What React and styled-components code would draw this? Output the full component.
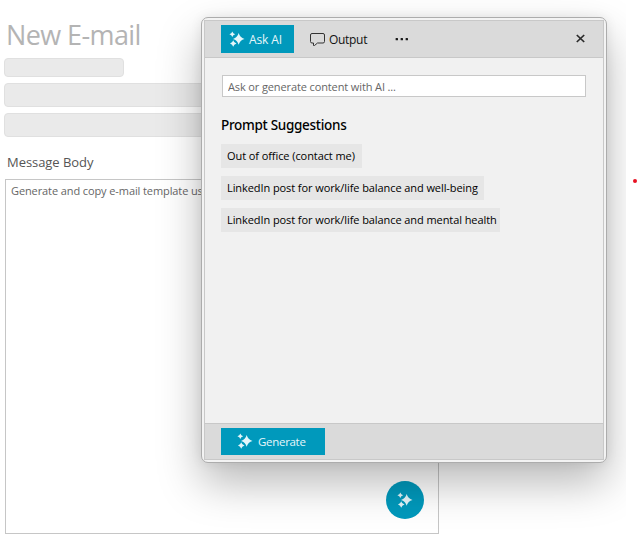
import React from "react";
import styled, { createGlobalStyle } from "styled-components";

const GlobalStyle = createGlobalStyle`
  * { box-sizing: border-box; }
  html, body { margin: 0; background: #fff; overflow: hidden; }
  body { font-family: "Open Sans", "Noto Sans", sans-serif; color: #111; }
  button, input { font-family: inherit; }
`;

const Screen = styled.main`
  position: relative;
  width: 638px;
  height: 543px;
  overflow: hidden;
  background: #fff;
`;

const Form = styled.section`
  display: flex;
  flex-direction: column;
  width: 439px;
  padding: 14px 0 0 4px;
`;

const Title = styled.h1`
  margin: 0 0 4px;
  padding-left: 2px;
  height: 40px;
  line-height: 41px;
  font-size: 27px;
  font-weight: 400;
  letter-spacing: -0.6px;
  color: #b4b4b4;
  white-space: nowrap;
`;

const Placeholder = styled.div`
  width: ${(p) => p.$width}px;
  height: ${(p) => p.$height}px;
  margin-bottom: 6px;
  border: 1px solid #e0e0e0;
  border-radius: 4px;
  background: #eaeaea;
`;

const Label = styled.label`
  margin-top: 11px;
  padding-left: 3px;
  height: 25px;
  line-height: 16px;
  font-size: 13px;
  letter-spacing: -0.05px;
  color: #555;
`;

const MessageBox = styled.div`
  display: flex;
  justify-content: space-between;
  flex-direction: column;
  width: 434px;
  height: 355px;
  margin-left: 1px;
  padding: 3px 14px 14px 5px;
  border: 1px solid #c6c6c6;
  font-size: 11px;
  line-height: 15px;
  letter-spacing: -0.1px;
  color: #666;
`;

const RoundButton = styled.button`
  display: flex;
  align-items: center;
  justify-content: center;
  align-self: flex-end;
  width: 38px;
  height: 38px;
  padding: 0;
  border: 0;
  border-radius: 50%;
  background: #0099bc;
`;

const ShadowClip = styled.div`
  position: absolute;
  inset: 0 12px 0 0;
  overflow: hidden;
`;

const Dialog = styled.div`
  position: absolute;
  left: 201px;
  top: 17px;
  width: 406px;
  height: 446px;
  padding: 2px;
  border: 1px solid #acacac;
  border-radius: 7px;
  background: #f3f3f3;
  box-shadow: 0 20px 44px rgba(0, 0, 0, 0.28), 0 0 12px rgba(0, 0, 0, 0.08);
`;

const DialogFrame = styled.div`
  display: flex;
  flex-direction: column;
  height: 100%;
  border: 1px solid #c8c8c8;
  background: #f1f1f1;
`;

const Toolbar = styled.header`
  display: flex;
  align-items: center;
  height: 37px;
  padding: 0 15px 0 16px;
  border-bottom: 1px solid #c8c8c8;
  background: #dadada;
`;

const TabButton = styled.button`
  display: flex;
  align-items: center;
  gap: 4px;
  width: ${(p) => (p.$active ? 73 : 90)}px;
  height: 28px;
  padding: 0 0 0 ${(p) => (p.$active ? 8 : 16)}px;
  border: 0;
  background: ${(p) => (p.$active ? "#0099bc" : "transparent")};
  color: ${(p) => (p.$active ? "#e6f6fa" : "#111")};
  font-size: 12px;
  letter-spacing: ${(p) => (p.$active ? "-0.1px" : "-0.3px")};
  white-space: nowrap;
`;

const IconButton = styled.button`
  display: flex;
  align-items: center;
  justify-content: center;
  width: 16px;
  height: 28px;
  padding: 0 0 ${(p) => p.$lift || 0}px;
  border: 0;
  background: transparent;
  margin-left: ${(p) => p.$offset};
`;

const Content = styled.div`
  display: flex;
  flex-direction: column;
  align-items: flex-start;
  flex: 1;
  padding: 17px 17px 0 16px;
`;

const PromptInput = styled.input`
  width: 364px;
  height: 22px;
  margin: 0 0 18px 1px;
  padding: 0 5px 0 5px;
  border: 1px solid #c8c8c8;
  border-radius: 0;
  background: #fff;
  font-size: 11px;
  letter-spacing: -0.12px;
  outline: none;
  &::placeholder { color: #666; opacity: 1; }
`;

const Heading = styled.h2`
  margin: 0 0 9px;
  height: 20px;
  line-height: 20px;
  font-family: "Noto Sans", "Open Sans", sans-serif;
  font-size: 13.5px;
  font-weight: 500;
  letter-spacing: -0.3px;
  color: #000;
  white-space: nowrap;
`;

const Suggestion = styled.button`
  width: ${(p) => p.$width}px;
  height: 24px;
  margin: 0 0 8px;
  padding: 0 0 1px 6px;
  border: 0;
  background: #e6e6e6;
  color: #000;
  font-size: 11px;
  letter-spacing: -0.08px;
  text-align: left;
  white-space: nowrap;
`;

const Footer = styled.footer`
  display: flex;
  align-items: center;
  height: 36px;
  padding: 0 16px;
  border-top: 1px solid #c8c8c8;
  background: #dadada;
`;

const GenerateButton = styled.button`
  display: flex;
  align-items: center;
  gap: 5px;
  width: 104px;
  height: 27px;
  padding: 0 0 1px 16px;
  border: 0;
  background: #0099bc;
  color: #e6f6fa;
  font-size: 11.5px;
  letter-spacing: -0.3px;
`;

const Dot = styled.i`
  position: absolute;
  left: 633px;
  top: 179px;
  width: 4px;
  height: 4px;
  border-radius: 50%;
  background: #e81123;
`;

const Sparkles = () => (
  <svg width="16" height="16" viewBox="0 0 16 16" fill="#e4f6fa">
    <path d="M9.7 2Q10.9 6.6 15.5 8Q10.9 9.2 9.7 13.8Q8.4 9.2 4 8Q8.4 6.6 9.7 2Z" />
    <path d="M3.3 .4Q3.9 2.6 6.2 3.3Q3.9 4 3.3 6.1Q2.7 4 .4 3.3Q2.7 2.6 3.3 .4Z" />
    <path d="M4.2 9.3Q4.9 11.9 7.5 12.6Q4.9 13.3 4.2 15.8Q3.5 13.3 1 12.6Q3.5 11.9 4.2 9.3Z" />
  </svg>
);

const Bubble = () => (
  <svg width="15" height="15" viewBox="0 0 15 15" fill="none" stroke="#333" strokeWidth="1">
    <path d="M2 1.5h11a1.5 1.5 0 0 1 1.5 1.5v6.5a1.5 1.5 0 0 1-1.5 1.5H7.5L4.5 13.5H3.5V11H2a1.5 1.5 0 0 1-1.5-1.5V3A1.5 1.5 0 0 1 2 1.5Z" />
  </svg>
);

const Dots = () => (
  <svg width="14" height="4" viewBox="0 0 14 4" fill="#1a1a1a">
    <rect x="0.6" y="1" width="2.4" height="2.3" rx=".5" />
    <rect x="5.6" y="1" width="2.4" height="2.3" rx=".5" />
    <rect x="10.6" y="1" width="2.4" height="2.3" rx=".5" />
  </svg>
);

const Cross = () => (
  <svg width="9" height="9" viewBox="0 0 9 9" stroke="#2a2a2a" strokeWidth="1.7">
    <path d="M.8 1L8.2 8M8.2 1L.8 8" />
  </svg>
);

const suggestions = [
  ["Out of office (contact me)", 141],
  ["LinkedIn post for work/life balance and well-being", 263],
  ["LinkedIn post for work/life balance and mental health", 279],
];

export default function App() {
  return (
    <Screen>
      <GlobalStyle />
      <Form>
        <Title>New E-mail</Title>
        <Placeholder $width={120} $height={19} />
        <Placeholder $width={435} $height={24} />
        <Placeholder $width={435} $height={24} />
        <Label>Message Body</Label>
        <MessageBox>
          <span>Generate and copy e-mail template using AI</span>
          <RoundButton aria-label="Ask AI"><Sparkles /></RoundButton>
        </MessageBox>
      </Form>
      <ShadowClip>
        <Dialog role="dialog">
          <DialogFrame>
            <Toolbar>
              <TabButton $active><Sparkles />Ask AI</TabButton>
              <TabButton><Bubble />Output</TabButton>
              <IconButton aria-label="More" $offset="10px"><Dots /></IconButton>
              <IconButton aria-label="Close" $offset="auto" $lift={2}><Cross /></IconButton>
            </Toolbar>
            <Content>
              <PromptInput placeholder="Ask or generate content with AI ..." />
              <Heading>Prompt Suggestions</Heading>
              {suggestions.map(([text, width]) => (
                <Suggestion key={text} $width={width}>{text}</Suggestion>
              ))}
            </Content>
            <Footer>
              <GenerateButton><Sparkles />Generate</GenerateButton>
            </Footer>
          </DialogFrame>
        </Dialog>
      </ShadowClip>
      <Dot />
    </Screen>
  );
}
